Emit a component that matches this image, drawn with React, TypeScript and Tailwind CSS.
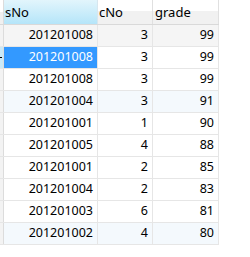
const rows = [
  ["201201008", "3", "99"],
  ["201201008", "3", "99"],
  ["201201008", "3", "99"],
  ["201201004", "3", "91"],
  ["201201001", "1", "90"],
  ["201201005", "4", "88"],
  ["201201001", "2", "85"],
  ["201201004", "2", "83"],
  ["201201003", "6", "81"],
  ["201201002", "4", "80"],
];

function rowBg(i: number) {
  if (i === 0) return "bg-[#f5f5f5]";
  if (i === 3 || i === 9) return "bg-[#f4f9fd]";
  return "bg-white";
}

export default function App() {
  return (
    <div
      className="w-[250px] h-[257px] bg-white text-[12.5px] text-black"
      style={{ fontFamily: '"Noto Sans", "Open Sans", sans-serif' }}
    >
      <div className="flex w-[219px] h-[25px] border-b border-[#d9d9d9]">
        <div className="w-[4px] border-r border-[#dcdcdc] bg-[linear-gradient(#ffffff_50%,#f0f0f0_50%)]" />
        <div className="w-[94px] border-r border-[#d7e6ee] bg-[linear-gradient(#e2f5fc,#b5e5f9)] pl-[1px] pt-[2px] flex items-center text-[13px]">
          sNo
        </div>
        <div className="w-[55px] border-r border-[#e0e0e0] bg-[linear-gradient(#ffffff_45%,#f1f1f1_45%)] pl-[1px] pt-[2px] flex items-center text-[13px]">
          cNo
        </div>
        <div className="w-[66px] border-r border-[#e0e0e0] bg-[linear-gradient(#ffffff_45%,#f1f1f1_45%)] pl-[2px] pt-[2px] flex items-center text-[13px]">
          grade
        </div>
      </div>
      {rows.map((r, i) => (
        <div key={i} className={`flex w-[219px] h-[22px] border-b border-[#e6e6e6] ${rowBg(i)}`}>
          <div
            className={`relative w-[4px] border-r border-[#dcdcdc] ${
              i === 1 ? "bg-[#c9e9f8]" : "bg-[#f3f3f3]"
            }`}
          >
            {i === 1 && <div className="absolute left-0 top-[10px] w-[2px] h-[1px] bg-black" />}
          </div>
          <div
            className={`w-[94px] border-r border-[#e6e6e6] pr-[4px] flex items-center justify-end ${
              i === 1 ? "bg-[#3399ff] text-white" : ""
            }`}
          >
            {r[0]}
          </div>
          <div className="w-[55px] border-r border-[#e6e6e6] pr-[4px] flex items-center justify-end">
            {r[1]}
          </div>
          <div className="w-[66px] border-r border-[#e6e6e6] pr-[4px] flex items-center justify-end">
            {r[2]}
          </div>
        </div>
      ))}
    </div>
  );
}
